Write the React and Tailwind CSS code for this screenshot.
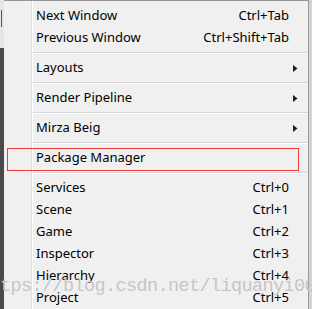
const menuFont = { fontFamily: '"Noto Sans", "Open Sans", sans-serif' };

const sections = [
	[
		{ label: "Next Window", shortcut: "Ctrl+Tab" },
		{ label: "Previous Window", shortcut: "Ctrl+Shift+Tab" },
	],
	[{ label: "Layouts", submenu: true }],
	[{ label: "Render Pipeline", submenu: true }],
	[{ label: "Mirza Beig", submenu: true }],
	[{ label: "Package Manager" }],
	[
		{ label: "Services", shortcut: "Ctrl+0" },
		{ label: "Scene", shortcut: "Ctrl+1" },
		{ label: "Game", shortcut: "Ctrl+2" },
		{ label: "Inspector", shortcut: "Ctrl+3" },
		{ label: "Hierarchy", shortcut: "Ctrl+4" },
		{ label: "Project", shortcut: "Ctrl+5" },
	],
];

const SubArrow = () => (
	<svg width="5" height="7" viewBox="0 0 5 7" className="absolute right-[10px] top-[8px]">
		<path d="M0 0 L4.5 3.5 L0 7 Z" fill="#1e1e1e" />
	</svg>
);

const MenuItem = ({ item }) => (
	<div className="relative flex h-[22px] items-center justify-between pl-[3px] pr-[19px] text-[13px] text-black">
		<span>{item.label}</span>
		{item.shortcut && <span>{item.shortcut}</span>}
		{item.submenu && <SubArrow />}
	</div>
);

const Separator = () => (
	<div className="flex h-[8px] flex-col justify-center">
		<div className="h-px bg-[#d7d7d7]" />
		<div className="h-px bg-white" />
	</div>
);

export default function App() {
	return (
		<div className="relative flex h-[309px] w-[312px] overflow-hidden bg-[#f0f0f0]" style={menuFont}>
			<div className="flex w-[4px] flex-col">
				<div className="relative h-[48px] bg-[#e6e6e6]">
					<div className="absolute left-[1px] top-[10px] h-[17px] w-px bg-[#555]" />
				</div>
				<div className="flex-1 bg-[#4a4a4a]" />
			</div>

			<div className="flex w-[305px] border-r border-t border-[#979797]">
				<div className="w-[28px] border-r border-[#e0e0e0]" />
				<div className="flex-1 border-l border-white pt-[4px]">
					{sections.map((section, i) => (
						<div key={i}>
							{i > 0 && <Separator />}
							{section.map((item) => (
								<MenuItem key={item.label} item={item} />
							))}
						</div>
					))}
				</div>
			</div>

			<div className="flex-1 bg-[#d4d4d4]" />

			{/* annotation box round Package Manager */}
			<div className="pointer-events-none absolute left-[7px] top-[148px] h-[23px] w-[292px] border border-[#f03c3c]" />

			{/* blog watermark */}
			<div
				className="pointer-events-none absolute left-[-21px] top-[273px] whitespace-nowrap text-[18.5px] tracking-[-0.6px] text-[#c6c6c6]"
				style={{ fontFamily: '"Liberation Mono", monospace' }}
			>
				https://blog.csdn.net/liquanyi007
			</div>
		</div>
	);
}
